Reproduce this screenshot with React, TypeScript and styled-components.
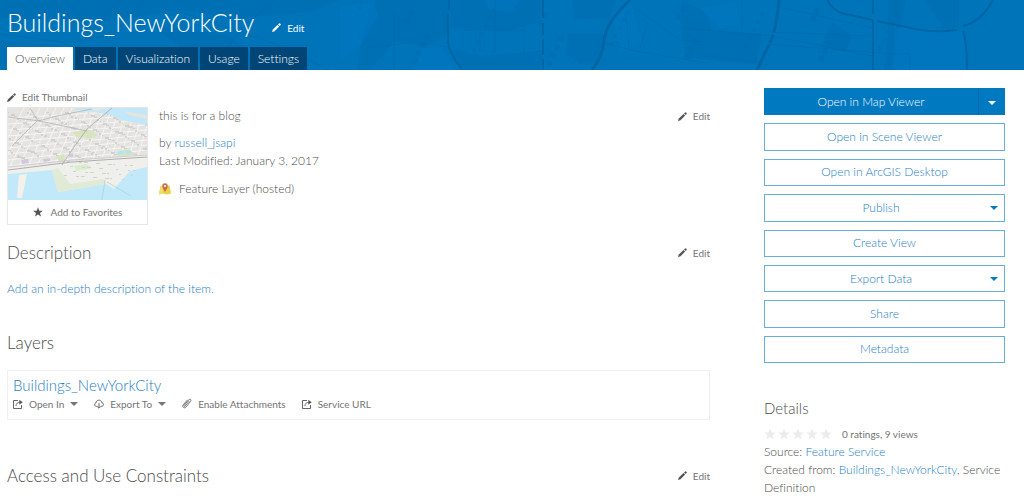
import React from "react";
import styled, { createGlobalStyle, css } from "styled-components";

const blue = "#0079c1";
const link = "#1f7ec2";
const ink = "#4c4c4c";
const muted = "#747474";

const GlobalStyle = createGlobalStyle`
  *, *::before, *::after { box-sizing: border-box; }
  body {
    margin: 0;
    background: #fff;
    color: ${ink};
    font: 300 12px/18px Lato, "Open Sans", sans-serif;
    font-variant-ligatures: none;
  }
  h1, h2, h3, p { margin: 0; font-weight: 300; }
  button { font: inherit; color: inherit; cursor: pointer; font-variant-ligatures: none; }
  a { color: ${link}; text-decoration: none; }
`;

const Header = styled.header`
  position: relative;
  overflow: hidden;
  background: #0074b9;
  padding: 6px 19px 0 7px;
  color: #fff;
`;

const Backdrop = styled.svg`
  position: absolute;
  inset: 0;
  width: 100%;
  height: 100%;
`;

const TitleRow = styled.div`
  position: relative;
  display: flex;
  align-items: baseline;
  gap: 18px;
  height: 41px;
`;

const Title = styled.h1`
  font-size: 25px;
  line-height: 32px;
`;

const Tabs = styled.nav`
  position: relative;
  display: flex;
  gap: 2px;
`;

const Tab = styled.a<{ $active?: boolean }>`
  padding: 0 8px;
  line-height: 23px;
  color: ${(p) => (p.$active ? ink : "#fff")};
  background: ${(p) => (p.$active ? "#fff" : "#004575")};
`;

const Page = styled.div`
  display: grid;
  grid-template-columns: minmax(0, 1fr) 241px;
  gap: 54px;
  padding: 18px 19px 0 7px;
`;

const TextButton = styled.button<{ $light?: boolean }>`
  display: inline-flex;
  align-items: center;
  gap: 6px;
  padding: 0;
  border: 0;
  background: none;
  font-size: 10px;
  font-weight: 400;
  line-height: 18px;
  color: ${(p) => (p.$light ? "#fff" : muted)};
  svg { color: ${(p) => (p.$light ? "#fff" : "#555")}; }
`;

const Summary = styled.section`
  display: grid;
  grid-template-columns: 141px minmax(0, 1fr) auto;
  column-gap: 11px;
`;

const Thumb = styled.div`
  border: 1px solid #e6e6e6;
  background: #fff;
`;

const ThumbArt = styled.svg`
  display: block;
  width: 100%;
  height: 92px;
`;

const Favorite = styled(TextButton)`
  width: 100%;
  justify-content: center;
  gap: 8px;
  line-height: 24px;
`;

const Info = styled.div`
  display: flex;
  flex-direction: column;
  padding-top: 19px;
`;

const Meta = styled.div`
  padding: 9px 0 10px;
`;

const TypeLine = styled.p`
  display: flex;
  align-items: center;
  gap: 8px;
`;

const SummaryEdit = styled.div`
  padding-top: 19px;
`;

const SectionHead = styled.div<{ $top: number }>`
  display: flex;
  align-items: center;
  justify-content: space-between;
  margin-top: ${(p) => p.$top}px;
`;

const Heading = styled.h2<{ $small?: boolean }>`
  font-size: ${(p) => (p.$small ? 15 : 17)}px;
  line-height: 24px;
`;

const Prompt = styled.p`
  margin-top: 15px;
`;

const LayerCard = styled.article`
  margin-top: 15px;
  padding: 5px 5px 6px;
  border: 1px solid #f0f0f0;
`;

const LayerName = styled.h3`
  font-size: 15px;
  line-height: 19px;
`;

const Actions = styled.div`
  display: flex;
  gap: 16px;
`;

const ButtonStack = styled.div`
  display: grid;
  grid-auto-rows: 1fr;
  gap: 8px;
  min-height: 275px;
`;

const Split = styled.div`
  display: flex;
`;

const filled = css`
  background: ${blue};
  color: #fff;
`;

const ActionButton = styled.button<{ $filled?: boolean }>`
  display: flex;
  flex: 1;
  align-items: center;
  justify-content: center;
  padding: 0 10px;
  border: 1px solid #66aedb;
  background: #fff;
  color: ${link};
  ${(p) => p.$filled && filled}
  ${(p) => p.$filled && "border-color: #0079c1;"}
`;

const Label = styled.span`
  flex: 1;
  text-align: center;
`;

const MenuToggle = styled.button`
  width: 27px;
  padding: 0;
  border: 0;
  border-left: 1px solid #0067a8;
  ${filled}
`;

const Caret = styled.span`
  display: inline-block;
  flex: none;
  vertical-align: middle;
  border: 4px solid transparent;
  border-top-color: currentColor;
  border-bottom: 0;
`;

const MenuCaret = styled(Caret)`
  margin: 0 -4px 0 3px;
  color: ${blue};
`;

const Details = styled.section`
  margin-top: 33px;
`;

const RatingRow = styled.div`
  display: flex;
  align-items: center;
  gap: 10px;
  margin-top: 5px;
  font-size: 10px;
  font-weight: 400;
  color: ${muted};
`;

const Stars = styled.span`
  display: flex;
  gap: 2px;
  color: #ececec;
`;

const Pencil = () => (
  <svg width="9" height="9" viewBox="0 0 9 9" fill="currentColor" aria-hidden="true">
    <path d="M0 9l.8-2.600L5.500 1.900l1.700 1.600L2.500 8.200zM6 1.400L7.100.4Q7.500 0 8 .4l.6.6q.5.5 0 1L7.600 3z" />
  </svg>
);

const Star = ({ size = 10 }: { size?: number }) => (
  <svg width={size} height={size} viewBox="0 0 12 12" fill="currentColor" aria-hidden="true">
    <path d="M6 .3l1.500 4.100 4.300.1-3.400 2.700 1.200 4.300L6 9.100l-3.600 2.400 1.200-4.300L.2 4.500l4.300-.1z" />
  </svg>
);

const FaintStar = styled.span`
  display: flex;
  svg { color: inherit; }
`;

const LaunchIcon = () => (
  <svg width="10" height="10" viewBox="0 0 10 10" fill="none" stroke="currentColor" strokeWidth=".9" aria-hidden="true">
    <path d="M5 1.500H.5v8h8V6M3 7c0-2.500 1.500-3.700 4-3.700" />
    <path d="M6.300.8L9.700 3.300 6.300 5.700z" fill="currentColor" stroke="none" />
  </svg>
);

const CloudIcon = () => (
  <svg width="10" height="10" viewBox="0 0 10 10" fill="none" stroke="currentColor" strokeWidth=".9" aria-hidden="true">
    <path d="M3.200 7.300H2.300C.2 7.300 0 4.400 2 4.100 2 .3 7.300.2 7.800 3.700 10 4 9.900 7.300 7.700 7.300H6.800M5 4v5M3.200 7.400L5 9.200l1.800-1.800" />
  </svg>
);

const ClipIcon = () => (
  <svg width="10" height="11" viewBox="0 0 10 11" fill="none" stroke="currentColor" strokeWidth=".8" aria-hidden="true">
    <path d="M7.300 3L3 8.100c-.6.7-1.500-.1-.9-.8L6.700 1.800c1.200-1.400 3.100.1 1.900 1.600L4 9c-1.700 2-4.400-.1-2.800-2.100L5.500 1.800" />
  </svg>
);

const LayerIcon = () => (
  <svg width="12" height="12" viewBox="0 0 12 12" aria-hidden="true">
    <path d="M1.500 3L10.500 2.500 12 10.500 8 11.500 4 10.500 0 11.500z" fill="#e9cf45" />
    <path d="M1.500 3L4.500 2.500 4 10.500 0 11.500z" fill="#f0dc69" />
    <path d="M6 9C4.500 6.500 3.300 5 3.300 3a2.700 2.700 0 015.400 0C8.700 5 7.500 6.500 6 9z" fill="#c96b51" />
    <circle cx="6" cy="3" r="1.100" fill="#fff" />
  </svg>
);

const MapBackdrop = () => (
  <Backdrop viewBox="0 0 1024 70" preserveAspectRatio="xMinYMin slice" fill="none" aria-hidden="true">
    <g fill="#006bad" opacity=".35">
      <path d="M0 0h340l-30 12-70 6-60-8-90 14-90-6z" />
      <path d="M375 0h73l2 36-26 10-30-4-24 28h-14l8-38z" />
      <path d="M450 0h93l-4 22-28 8-60-2z" />
      <path d="M448 48l34 8 62-6-4 20h-76z" />
      <path d="M568 34l38 0-10 28-16 2-14-10zM572 0h45l-9 18-34 2z" />
      <path d="M682 0l24 12 6 18 50 4-6 30-70-6-6-30zM832 22l20 14-6 16-26-6z" />
      <path d="M888 0h18l-8 36-4 34h-10l4-36zM925 0h34v26l-12 6z" />
      <path d="M0 40l60 6 40 24H0zM150 24l80 12 40 34h-60z" />
    </g>
    <g fill="#007bc5" opacity=".4">
      <path d="M340 6l34-4 4 14-16 28-22 16zM484 0h36l-8 12-22-2zM422 48l20 0 12 22h-40zM700 8l36-6 4 22-20 4z" />
      <path d="M895 26l70 6 1 38h-74zM612 12l20-8 10 40-22 8z" />
    </g>
    <g stroke="#0067a6" opacity=".4">
      <path d="M0 34l62 8 58 28M120 0L82 42M144 0l-30 34-40 8M180 12l90 30 60 28M210 70l36-46 30-24M394 12v58M366 48l50-6 32 5M495 0v52M464 30h60v24M480 30v22" />
      <path d="M605 43l30 8 72 12M638 10l42 30 28 2M626 14l3 34M648 22l-8 26M682 28l90 8 101 20M784 8l89 20M770 32l103 4M766 44l130 10h14v16M742 0v30M700 56l60 6" />
    </g>
    <g fill="#0068ab" opacity=".3">
      {Array.from({ length: 44 }, (_, i) => (
        <circle key={i} cx={360 + ((i * 67) % 540)} cy={8 + ((i * 29) % 56)} r={2 + (i % 2)} />
      ))}
    </g>
    <g stroke="#005f9c" opacity=".65">
      <path d="M449 0v10M448 14v28q1 12 14 27" strokeWidth="2" />
      <path d="M543 0v18M543 23v12M543 39v16M543 59v11" strokeWidth="2" />
      <path d="M630 0q-25 23-26 42-2 16-12 28" strokeWidth="3" />
      <path d="M779 0q-2 24-7 38l-15 32" strokeWidth="3" strokeDasharray="33 2 9 2" />
      <path d="M827 0q8 14 24 15l22 5M877 21l38 8q22 4 42 1M963 26q18-4 30-26M963 31q4 12 4 39M873 0v14M873 20v50" strokeWidth="2" />
    </g>
  </Backdrop>
);

const ThumbMap = () => (
  <ThumbArt viewBox="0 0 139 92" preserveAspectRatio="xMidYMid slice" role="img" aria-label="Map of city blocks along a waterfront">
    <rect width="139" height="92" fill="#e4e3e0" />
    <g stroke="#f5f5f4" fill="none">
      {Array.from({ length: 9 }, (_, i) => (
        <path key={i} d={`M0 ${10 + i * 6}L139 ${2 + i * 5}`} />
      ))}
      {Array.from({ length: 19 }, (_, i) => (
        <path key={i} d={`M${16 + i * 8} 0L${i * 9 - 18} 62`} />
      ))}
    </g>
    <g fill="#cdccc9" opacity=".8">
      {Array.from({ length: 190 }, (_, i) => (
        <rect key={i} x={(i * 37) % 138} y={4 + ((i * 23) % 49)} width={1 + (i % 4)} height={1 + (i % 2)} />
      ))}
    </g>
    <path d="M68 0h71v17l-22-4-17-7-32-4z" fill="#c2e7f8" />
    <path d="M82 0h19l-13 3zM116 3l23 4v4l-18-4z" fill="#e4e5df" />
    <path d="M65 24l14-3 11 5-5 4-17-1zM48 49l8-3 1 6-5 2zM108 45l10-4 9 4-6 4-11 0z" fill="#d8e4bf" />
    <path d="M108 45l6-3 2 3-5 2zM116 43l6-1 2 3-5 1z" fill="#b4e2f5" />
    <path d="M13 52l7-1 1 4-7 1zM36 51l6-1v3l-6 1zM61 46l4-1v4h-4z" fill="#d3c8df" />
    <path d="M0 60l139-14v46H0z" fill="#efefec" />
    <path d="M0 66l44-4 6 22 48-8 8 5 16-18 17-4v33H0z" fill="#c2e9fa" />
    <path d="M11 67l8-1-5 24H9z" fill="#f3f1e9" />
    <path d="M44 62l6 22 48-8-3-5-33 5-12-16z" fill="#e0ebd6" />
    <path d="M66 58l12-2 6 4-16 3z" fill="#dcebca" />
    <g fill="#d2d1ce">
      {Array.from({ length: 30 }, (_, i) => (
        <rect key={i} x={54 + ((i * 23) % 72)} y={53 + ((i * 11) % 19)} width={2 + (i % 3)} height="1" />
      ))}
    </g>
    <g fill="none" stroke="#adadad">
      <path d="M0 62l64-8 75-5" />
      <path d="M0 59l64-7 75-5" stroke="#cfcfcf" />
      <path d="M104 0L79 21 66 39 54 57" strokeWidth=".9" />
      <path d="M22 0l8 13 19-5 35-7M30 12L4 38M0 9l32 4 47 10" strokeWidth=".7" />
      <path d="M97 72l-3 20M99 74l24 14" stroke="#a9c8d8" strokeWidth=".6" />
    </g>
  </ThumbArt>
);

const EditButton = ({ light }: { light?: boolean }) => (
  <TextButton type="button" $light={light}>
    <Pencil /> Edit
  </TextButton>
);

const tabs = ["Overview", "Data", "Visualization", "Usage", "Settings"];

const sideActions: { label: string; menu?: boolean }[] = [
  { label: "Open in Scene Viewer" },
  { label: "Open in ArcGIS Desktop" },
  { label: "Publish", menu: true },
  { label: "Create View" },
  { label: "Export Data", menu: true },
  { label: "Share" },
  { label: "Metadata" },
];

export default function App() {
  return (
    <>
      <GlobalStyle />
      <Header>
        <MapBackdrop />
        <TitleRow>
          <Title>Buildings_NewYorkCity</Title>
          <EditButton light />
        </TitleRow>
        <Tabs aria-label="Item">
          {tabs.map((t, i) => (
            <Tab key={t} href={`#${t.toLowerCase()}`} $active={i === 0} aria-current={i === 0 ? "page" : undefined}>
              {t}
            </Tab>
          ))}
        </Tabs>
      </Header>
      <Page>
        <main>
          <Summary>
            <div>
              <TextButton type="button">
                <Pencil /> Edit Thumbnail
              </TextButton>
              <Thumb>
                <ThumbMap />
                <Favorite type="button">
                  <Star /> Add to Favorites
                </Favorite>
              </Thumb>
            </div>
            <Info>
              <p>this is for a blog</p>
              <Meta>
                <p>
                  by <a href="#owner">russell_jsapi</a>
                </p>
                <p>Last Modified: January 3, 2017</p>
              </Meta>
              <TypeLine>
                <LayerIcon /> Feature Layer (hosted)
              </TypeLine>
            </Info>
            <SummaryEdit>
              <EditButton />
            </SummaryEdit>
          </Summary>

          <SectionHead $top={16}>
            <Heading>Description</Heading>
            <EditButton />
          </SectionHead>
          <Prompt>
            <a href="#description">Add an in-depth description of the item.</a>
          </Prompt>

          <SectionHead $top={33}>
            <Heading>Layers</Heading>
          </SectionHead>
          <LayerCard>
            <LayerName>
              <a href="#layer">Buildings_NewYorkCity</a>
            </LayerName>
            <Actions>
              <TextButton type="button">
                <LaunchIcon /> Open In <Caret />
              </TextButton>
              <TextButton type="button">
                <CloudIcon /> Export To <Caret />
              </TextButton>
              <TextButton type="button">
                <ClipIcon /> Enable Attachments
              </TextButton>
              <TextButton type="button">
                <LaunchIcon /> Service URL
              </TextButton>
            </Actions>
          </LayerCard>

          <SectionHead $top={44}>
            <Heading>Access and Use Constraints</Heading>
            <EditButton />
          </SectionHead>
        </main>

        <aside>
          <ButtonStack>
            <Split>
              <ActionButton type="button" $filled>
                Open in Map Viewer
              </ActionButton>
              <MenuToggle type="button" aria-label="More ways to open">
                <Caret />
              </MenuToggle>
            </Split>
            {sideActions.map((a) => (
              <ActionButton key={a.label} type="button">
                <Label>{a.label}</Label>
                {a.menu && <MenuCaret />}
              </ActionButton>
            ))}
          </ButtonStack>
          <Details>
            <Heading as="h3" $small>
              Details
            </Heading>
            <RatingRow>
              <Stars role="img" aria-label="No ratings">
                {[0, 1, 2, 3, 4].map((n) => (
                  <FaintStar key={n}>
                    <Star size={12} />
                  </FaintStar>
                ))}
              </Stars>
              0 ratings, 9 views
            </RatingRow>
            <p>
              Source: <a href="#source">Feature Service</a>
            </p>
            <p>
              Created from: <a href="#origin">Buildings_NewYorkCity</a>, Service Definition
            </p>
          </Details>
        </aside>
      </Page>
    </>
  );
}
